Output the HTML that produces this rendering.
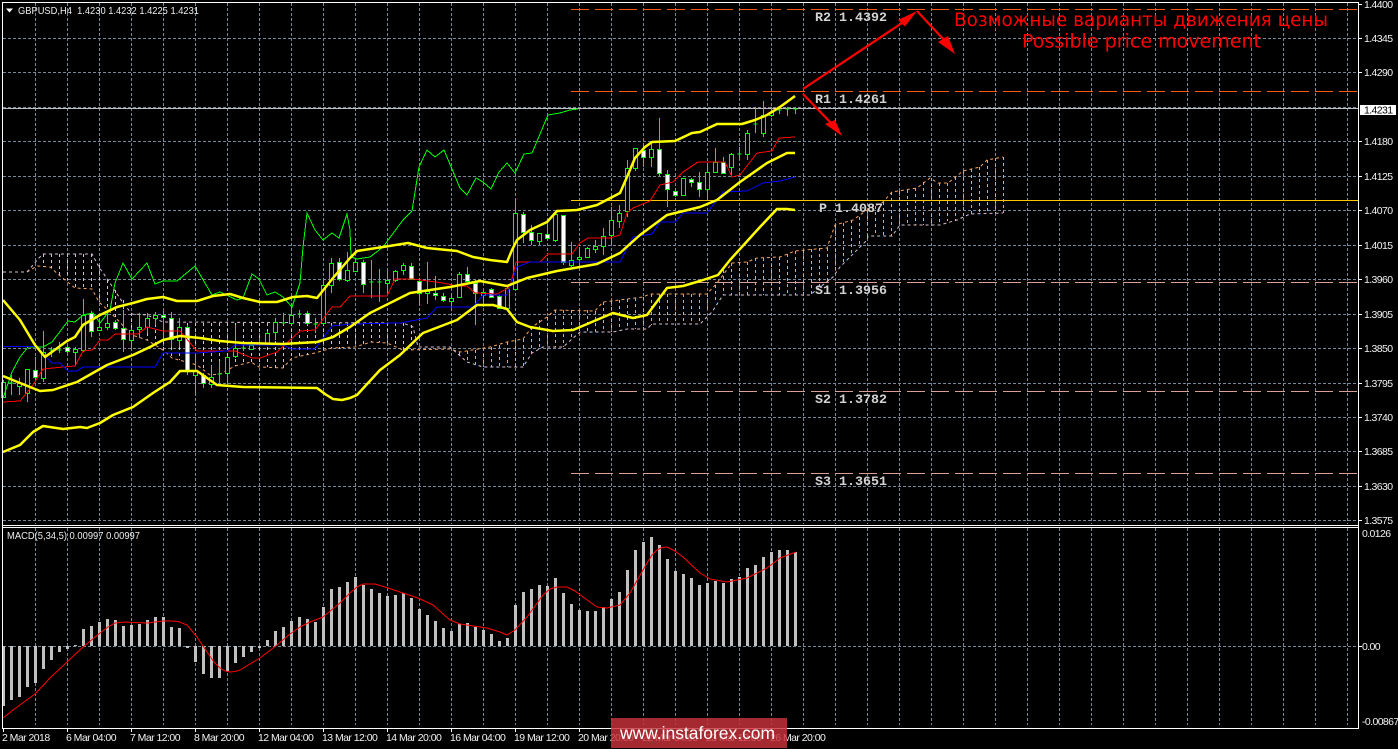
<!DOCTYPE html>
<html><head><meta charset="utf-8"><title>GBPUSD,H4</title>
<style>
html,body{margin:0;padding:0;background:#000;width:1398px;height:749px;overflow:hidden}
svg{display:block}
text{font-family:"Liberation Sans",sans-serif}
.a{font-size:10.5px;fill:#f2f2f2;letter-spacing:-.6px}
.d{font-size:10.5px;fill:#f2f2f2;letter-spacing:-.55px}
.p{font-family:"Liberation Mono",monospace;font-size:13.33px;font-weight:bold;fill:#d3d3d3;white-space:pre}
.r{font-family:"DejaVu Sans",sans-serif;font-size:18.5px;fill:#f00}
</style></head><body>
<svg width="1398" height="749" viewBox="0 0 1398 749" xmlns="http://www.w3.org/2000/svg" fill="none">
<rect width="1398" height="749" fill="#000"/>
<!-- grid -->
<g stroke="#778899" stroke-width="1" stroke-dasharray="3 2">
<path d="M3 38.5H1358M3 72.5H1358M3 107.5H1358M3 141.5H1358M3 176.5H1358M3 210.5H1358M3 245.5H1358M3 279.5H1358M3 314.5H1358M3 348.5H1358M3 383.5H1358M3 417.5H1358M3 451.5H1358M3 486.5H1358M3 520.5H1358M3 646.5H1358"/>
<path d="M35.5 3V524m32-521V524m32-521V524m32-521V524m32-521V524m32-521V524m32-521V524m32-521V524m32-521V524m32-521V524m32-521V524m32-521V524m32-521V524m32-521V524m32-521V524m32-521V524m32-521V524m32-521V524m32-521V524m32-521V524m32-521V524m32-521V524m32-521V524m32-521V524m32-521V524m32-521V524m32-521V524m32-521V524m32-521V524m32-521V524m32-521V524m32-521V524m32-521V524m32-521V524m32-521V524m32-521V524m32-521V524m32-521V524m32-521V524m32-521V524m32-521V524m32-521V524"/>
<path d="M35.5 528V725m32-197V725m32-197V725m32-197V725m32-197V725m32-197V725m32-197V725m32-197V725m32-197V725m32-197V725m32-197V725m32-197V725m32-197V725m32-197V725m32-197V725m32-197V725m32-197V725m32-197V725m32-197V725m32-197V725m32-197V725m32-197V725m32-197V725m32-197V725m32-197V725m32-197V725m32-197V725m32-197V725m32-197V725m32-197V725m32-197V725m32-197V725m32-197V725m32-197V725m32-197V725m32-197V725m32-197V725m32-197V725m32-197V725m32-197V725m32-197V725m32-197V725"/>
</g>
<!-- kumo -->
<g stroke-width="1" stroke-dasharray="3 3">
<path stroke="#f4a460" d="M3 272L27 272L37 266L50 267L59 275L75 288L92 289L99 302L110 312L132 335L147 340L163 350L172 358L197 365L210 375L220 374L235 366L251 362L259 367L283 368L292 358L315 353L332 348L355 347L371 342L387 343L403 350L450 349L460 352L490 347L507 342L523 339L532 327L547 317L555 310L595 311L603 302L643 297L650 294L707 294L717 283L732 263L747 262L757 258L780 257L795 251L827 248L835 225L853 220L867 210L883 202L892 192L917 188L930 178L938 183L948 183L963 171L980 167L987 160L1003 157"/>
<path stroke="#d8bfd8" d="M3 272L27 272L39 258L43 254L92 254L99 267L110 283L123 303L132 314L147 315L163 322L403 323L413 327L418 347L450 347L467 362L483 367L523 367L532 353L543 347L563 347L580 332L613 332L627 329L647 329L652 324L700 324L712 312L723 295L810 295L833 277L840 267L867 240L868 236L892 236L900 225L940 225L957 220L970 214L1003 213"/>
<path stroke="#d8bfd8" d="M43.5 254V267M51.5 254V268M59.5 254V275M67.5 254V280M75.5 254V288M83.5 254V288M91.5 254V289M99.5 265V302M107.5 280V310M115.5 290V318M123.5 300V328M131.5 313V335M139.5 314V338M147.5 315V340M155.5 318V344M163.5 323V350M171.5 323V358M179.5 323V360M187.5 323V362M195.5 323V365M203.5 323V370M211.5 323V375M219.5 323V375M227.5 323V370M235.5 323V366M243.5 323V364M251.5 323V362M259.5 323V366M267.5 323V367M275.5 323V368M283.5 323V368M291.5 323V358M299.5 323V357M307.5 323V355M315.5 323V353M323.5 323V350M331.5 323V348M339.5 323V349M347.5 323V347M355.5 323V347M363.5 323V344M371.5 323V342M379.5 323V342M387.5 323V343M395.5 323V345M403.5 323V350M411.5 325V350"/>
<path stroke="#f4a460" d="M459.5 352V356M467.5 351V362M475.5 350V365M483.5 348V367M491.5 347V367M499.5 345V367M507.5 342V367M515.5 340V367M523.5 339V367M531.5 327V354M539.5 320V348M547.5 317V347M555.5 310V347M563.5 310V347M571.5 310V340M579.5 310V332M587.5 310V332M595.5 311V332M603.5 302V332M611.5 301V332M619.5 300V330M627.5 299V329M635.5 298V329M643.5 297V329M651.5 294V325M659.5 294V324M667.5 294V324M675.5 294V324M683.5 294V324M691.5 294V324M699.5 294V322M707.5 294V312M715.5 285V303M723.5 270V295M731.5 263V295M739.5 262V295M747.5 262V295M755.5 258V295M763.5 258V295M771.5 258V295M779.5 257V295M787.5 254V295M795.5 251V295M803.5 250V295M811.5 249V295M819.5 248V288M827.5 248V281M835.5 225V273M843.5 223V264M851.5 220V256M859.5 217V248M867.5 210V237M875.5 206V236M883.5 202V236M891.5 192V236M899.5 191V225M907.5 190V225M915.5 188V225M923.5 182V225M931.5 178V225M939.5 183V225M947.5 183V221M955.5 177V220M963.5 171V217M971.5 169V214M979.5 167V214M987.5 160V213M995.5 158V213M1003.5 157V213"/>
</g>
<!-- pivots -->
<g stroke-width="1" stroke-dasharray="18 6">
<path stroke="#ff5a14" d="M571 9.5H1357M571 91.5H1357"/>
<path stroke="#d8a090" d="M571 282.5H1357M571 391.5H1357M571 473.5H1357"/>
</g>
<path stroke="#ffc800" d="M571 200.5H1358"/>
<path stroke="#c0c0c0" d="M3 108.5H1358"/>
<!-- candles -->
<path stroke="#0f0" d="M3.5 380V398M11.5 375V395M9.5 383h4M19.5 378V395M27.5 369V402M35.5 357V382M43.5 331V382M51.5 347V357M49.5 350h4M59.5 342V353M57.5 350h4M67.5 345V353M75.5 347V366M83.5 299V352M91.5 311V337M99.5 321V331M107.5 310V330M115.5 320V330M123.5 310V352M131.5 328V348M139.5 313V338M147.5 313V333M155.5 312V325M163.5 311V340M171.5 312V347M179.5 318V347M187.5 325V375M195.5 353V395M203.5 373V388M211.5 365V388M219.5 361V383M217.5 374h4M227.5 356V383M235.5 325V358M243.5 345V351M241.5 348h4M251.5 343V350M259.5 341V346M257.5 343h4M267.5 331V345M275.5 318V340M283.5 313V325M281.5 323h4M291.5 307V325M299.5 310V318M297.5 314h4M307.5 311V325M315.5 318V333M313.5 324h4M323.5 278V325M331.5 258V293M339.5 258V281M347.5 252V282M355.5 258V271M363.5 260V293M371.5 260V298M369.5 282h4M379.5 269V302M377.5 282h4M387.5 270V293M395.5 270V282M403.5 263V275M411.5 263V280M419.5 278V305M427.5 262V304M435.5 276V300M443.5 293V302M451.5 293V311M459.5 272V298M467.5 267V282M475.5 280V325M483.5 290V307M491.5 288V297M499.5 295V308M507.5 287V310M515.5 199V290M523.5 212V243M531.5 225V245M539.5 233V245M547.5 225V240M555.5 212V242M563.5 215V265M571.5 242V267M579.5 247V263M587.5 247V258M595.5 240V253M603.5 228V255M611.5 207V245M619.5 205V228M627.5 160V217M635.5 148V171M643.5 143V167M651.5 143V167M659.5 118V176M667.5 170V207M675.5 188V197M683.5 178V196M691.5 178V187M699.5 172V197M707.5 163V200M715.5 148V172M723.5 157V174M731.5 153V177M739.5 147V160M737.5 154h4M747.5 130V160M755.5 107V133M753.5 124h4M763.5 101V137M771.5 107V117M779.5 107V114M777.5 110h4M787.5 107V116M785.5 109h4M795.5 108V114M793.5 109h4"/>
<path stroke="#0f0" fill="#000" d="M1.5 382.5h4v15h-4zM17.5 383.5h4v3h-4zM25.5 369.5h4v24h-4zM41.5 352.5h4v26h-4zM73.5 349.5h4v3h-4zM81.5 315.5h4v35h-4zM97.5 327.5h4v3h-4zM105.5 323.5h4v4h-4zM129.5 330.5h4v10h-4zM137.5 327.5h4v2h-4zM145.5 318.5h4v9h-4zM153.5 315.5h4v3h-4zM177.5 327.5h4v13h-4zM193.5 370.5h4v5h-4zM209.5 377.5h4v7h-4zM225.5 357.5h4v16h-4zM233.5 348.5h4v8h-4zM249.5 345.5h4v4h-4zM265.5 333.5h4v10h-4zM273.5 322.5h4v10h-4zM289.5 315.5h4v8h-4zM321.5 285.5h4v38h-4zM329.5 263.5h4v22h-4zM345.5 270.5h4v10h-4zM353.5 262.5h4v9h-4zM385.5 280.5h4v3h-4zM393.5 271.5h4v9h-4zM401.5 265.5h4v5h-4zM425.5 291.5h4v2h-4zM449.5 298.5h4v3h-4zM457.5 274.5h4v23h-4zM481.5 292.5h4v3h-4zM505.5 288.5h4v20h-4zM513.5 213.5h4v76h-4zM537.5 233.5h4v8h-4zM553.5 214.5h4v26h-4zM569.5 260.5h4v5h-4zM577.5 257.5h4v2h-4zM585.5 248.5h4v9h-4zM593.5 246.5h4v3h-4zM601.5 236.5h4v10h-4zM609.5 220.5h4v15h-4zM617.5 213.5h4v8h-4zM625.5 168.5h4v43h-4zM633.5 148.5h4v20h-4zM649.5 149.5h4v8h-4zM681.5 178.5h4v17h-4zM705.5 172.5h4v17h-4zM713.5 162.5h4v10h-4zM729.5 154.5h4v13h-4zM745.5 133.5h4v21h-4zM761.5 115.5h4v18h-4zM769.5 112.5h4v3h-4z"/>
<path stroke="#0f0" fill="#fff" d="M33.5 370.5h4v7h-4zM65.5 347.5h4v4h-4zM89.5 313.5h4v18h-4zM113.5 322.5h4v6h-4zM121.5 328.5h4v11h-4zM161.5 315.5h4v2h-4zM169.5 318.5h4v21h-4zM185.5 327.5h4v43h-4zM201.5 375.5h4v8h-4zM305.5 313.5h4v10h-4zM337.5 262.5h4v17h-4zM361.5 262.5h4v22h-4zM409.5 266.5h4v13h-4zM417.5 281.5h4v12h-4zM433.5 293.5h4v2h-4zM441.5 296.5h4v4h-4zM465.5 274.5h4v7h-4zM473.5 283.5h4v10h-4zM489.5 289.5h4v8h-4zM497.5 296.5h4v12h-4zM521.5 214.5h4v18h-4zM529.5 232.5h4v8h-4zM545.5 234.5h4v4h-4zM561.5 215.5h4v47h-4zM641.5 150.5h4v7h-4zM657.5 149.5h4v24h-4zM665.5 174.5h4v15h-4zM673.5 191.5h4v4h-4zM689.5 179.5h4v3h-4zM697.5 182.5h4v7h-4zM721.5 162.5h4v11h-4z"/>
<!-- ichimoku -->
<g shape-rendering="crispEdges">
<path stroke="#0f0" d="M3 398L12 372L20 357L28 347L43 347L52 342L68 321L75 322L83 315L93 313L100 323L110 310L115 283L123 263L132 279L147 263L155 284L163 281L177 281L195 266L212 295L220 292L237 300L243 298L252 274L259 279L267 295L275 292L283 297L292 307L300 283L303 247L307 213L315 230L323 240L332 233L339 238L347 214L350 230L351 257L357 259L370 257L383 247L403 220L412 211L419 167L427 150L435 157L444 150L460 188L467 195L476 178L483 182L491 189L499 172L507 163L515 173L524 154L532 153L535 146L548 115L560 113L570 110L578 109"/>
<path stroke="#f00" d="M3 402L20 401L33 385L43 369L63 367L75 366L83 351L92 350L100 340L108 340L115 334L138 334L147 327L163 331L180 331L197 351L235 351L252 358L260 358L277 352L300 331L315 330L332 307L340 307L350 296L387 296L395 279L413 279L443 283L457 286L467 286L475 293L497 294L510 287L516 262L540 262L548 254L572 254L580 243L588 238L610 238L620 235L627 213L633 208L650 201L660 185L673 182L683 172L698 162L725 162L732 177L740 175L757 153L772 151L779 138L795 137"/>
<path stroke="#00f" d="M3 346.5L35 346.5L52 363L60 363L68 371L77 371L83 367L155 367L163 353L197 353L227 351L235 345L283 345L292 349L315 349L332 326L350 324L400 323L427 318L437 307L473 307L483 295L507 295L517 267L530 262L620 262L633 237L652 234L660 222L675 222L683 213L707 213L723 192L747 191L763 183L780 181L795 177"/>
</g>
<g stroke="#ff0" stroke-width="2.5" stroke-linejoin="round">
<path d="M3 300L20 320L35 345L45 357L67 341L75 337L83 325L100 315L117 307L133 303L147 299L163 297L177 301L197 301L213 296L230 294L243 298L260 302L277 302L293 297L307 296L317 298L325 288L333 278L350 258L357 251L383 247L408 243L427 248L457 251L473 257L490 260L507 262L512 250L517 240L530 230L547 222L557 211L577 210L597 205L620 193L627 177L635 158L645 147L652 142L675 141L692 133L700 132L717 124L742 124L755 120L767 115L780 107L795 96"/>
<path d="M3 376L20 383L40 391L53 390L77 382L107 365L133 355L150 347L163 340L180 336L200 338L220 341L243 343L283 344L317 342L333 337L350 327L370 313L410 293L450 287L480 281L507 286L527 278L557 271L597 264L620 253L640 235L667 215L700 207L717 200L740 182L767 163L787 153L795 153"/>
<path d="M3 452L20 445L33 432L43 426L63 429L80 427L87 428L100 423L113 415L133 407L153 393L170 382L180 371L197 371L217 385L243 387L317 388L325 394L333 399L342 400L350 398L357 395L380 370L400 355L423 333L457 320L477 305L493 305L507 309L517 322L530 327L553 331L573 330L613 313L633 318L647 315L667 288L683 286L700 281L718 275L730 260L760 227L777 209L787 209L795 210"/>
</g>
<!-- arrows -->
<g stroke="#f00" stroke-width="2.2">
<path d="M803 89L905 21"/>
<path d="M917 11L945 41"/>
<path d="M803 94L831 123"/>
</g>
<path fill="#f00" d="M917 11L898 20L905 26.5zM955 54L938 42L948 36zM842 136L825 124L835 120z"/>
<!-- pivot labels -->
<text class="p" x="815" y="21">R2 1.4392</text>
<text class="p" x="815" y="103">R1 1.4261</text>
<text class="p" x="819" y="212">P 1.4087</text>
<text class="p" x="815" y="294">S1 1.3956</text>
<text class="p" x="815" y="403">S2 1.3782</text>
<text class="p" x="815" y="485">S3 1.3651</text>
<text class="r" x="954" y="26" textLength="374" lengthAdjust="spacingAndGlyphs">Возможные варианты движения цены</text>
<text class="r" x="1022" y="47.5" textLength="239" lengthAdjust="spacingAndGlyphs">Possible price movement</text>
<!-- macd -->
<path stroke="#c0c0c0" stroke-width="3" d="M3.5 646V706M11.5 646V700M19.5 646V697M27.5 646V687M35.5 646V683M43.5 646V669M51.5 646V660M59.5 646V652M67.5 646V649M75.5 646V645M83.5 646V629M91.5 646V626M99.5 646V622M107.5 646V619M115.5 646V620M123.5 646V626M131.5 646V625M139.5 646V624M147.5 646V620M155.5 646V617M163.5 646V617M171.5 646V627M179.5 646V628M187.5 646V648M195.5 646V662M203.5 646V674M211.5 646V678M219.5 646V678M227.5 646V671M235.5 646V663M243.5 646V657M251.5 646V652M259.5 646V648M267.5 646V640M275.5 646V631M283.5 646V627M291.5 646V621M299.5 646V617M307.5 646V619M315.5 646V622M323.5 646V607M331.5 646V589M339.5 646V587M347.5 646V582M355.5 646V577M363.5 646V585M371.5 646V589M379.5 646V593M387.5 646V596M395.5 646V595M403.5 646V593M411.5 646V598M419.5 646V609M427.5 646V615M435.5 646V621M443.5 646V628M451.5 646V631M459.5 646V624M467.5 646V623M475.5 646V627M483.5 646V630M491.5 646V634M499.5 646V641M507.5 646V638M515.5 646V605M523.5 646V592M531.5 646V589M539.5 646V585M547.5 646V586M555.5 646V578M563.5 646V593M571.5 646V604M579.5 646V610M587.5 646V611M595.5 646V611M603.5 646V607M611.5 646V599M619.5 646V592M627.5 646V570M635.5 646V550M643.5 646V542M651.5 646V537M659.5 646V545M667.5 646V559M675.5 646V571M683.5 646V574M691.5 646V578M699.5 646V585M707.5 646V583M715.5 646V581M723.5 646V583M731.5 646V579M739.5 646V577M747.5 646V568M755.5 646V565M763.5 646V557M771.5 646V552M779.5 646V550M787.5 646V550M795.5 646V552"/>
<path stroke="#f00" stroke-linejoin="round" d="M3 718L13 710L35 694L50 678L67 662L83 647L100 633L108 627L115 623L125 622L133 622.5L147 623L155 622L163 621L172 621L178 621.5L187 625L197 637L207 652L214 662L220 668L225 671L230 672L235 671.5L240 670L260 658L277 645L290 634L300 627L310 622L323 617L340 603L350 593L357 587L363 584L375 584L385 587L400 592L418 598L433 605L442 613L450 620L460 624L487 628L500 632L507 635L515 630L527 617L543 595L550 589L557 587L567 587L575 591L583 597L597 607L607 608L620 605L630 593L647 563L652 555L657 550L662 547.5L667 547L675 551L683 557L700 573L710 579L727 582L747 578L767 568L780 558L788 555L796 552"/>
<!-- frame -->
<g stroke="#fff">
<path d="M2.5 2V729M2 2.5H1359M1358.5 2V729M2 525.5H1359M2 527.5H1359M2 728.5H1359"/>
<path d="M1359 4.5h3M1359 38.5h3M1359 72.5h3M1359 141.5h3M1359 176.5h3M1359 210.5h3M1359 245.5h3M1359 279.5h3M1359 314.5h3M1359 348.5h3M1359 383.5h3M1359 417.5h3M1359 451.5h3M1359 486.5h3M1359 520.5h3M1359 646.5h3"/>
<path d="M3.5 729v3M67.5 729v3M131.5 729v3M195.5 729v3M259.5 729v3M323.5 729v3M387.5 729v3M451.5 729v3M515.5 729v3M579.5 729v3M643.5 729v3M707.5 729v3M771.5 729v3"/>
</g>
<!-- header -->
<path fill="#fff" d="M6 8.5h7l-3.5 4z"/>
<text x="18" y="14" font-size="10.5" fill="#eee" textLength="181" lengthAdjust="spacingAndGlyphs" style="white-space:pre">GBPUSD,H4  1.4230 1.4232 1.4225 1.4231</text>
<text x="7" y="539" font-size="10.5" fill="#eee" textLength="133" lengthAdjust="spacingAndGlyphs">MACD(5,34,5) 0.00997 0.00997</text>
<!-- price axis -->
<text class="a" x="1364" y="8">1.4400</text>
<text class="a" x="1364" y="42">1.4345</text>
<text class="a" x="1364" y="76">1.4290</text>
<rect x="1360" y="105" width="36" height="10" fill="#fff"/>
<text class="a" x="1364" y="113.5" style="fill:#000">1.4231</text>
<text class="a" x="1364" y="145">1.4180</text>
<text class="a" x="1364" y="180">1.4125</text>
<text class="a" x="1364" y="214">1.4070</text>
<text class="a" x="1364" y="249">1.4015</text>
<text class="a" x="1364" y="283">1.3960</text>
<text class="a" x="1364" y="318">1.3905</text>
<text class="a" x="1364" y="352">1.3850</text>
<text class="a" x="1364" y="387">1.3795</text>
<text class="a" x="1364" y="421">1.3740</text>
<text class="a" x="1364" y="455">1.3685</text>
<text class="a" x="1364" y="490">1.3630</text>
<text class="a" x="1364" y="524">1.3575</text>
<text class="a" x="1362" y="537">0.0126</text>
<text class="a" x="1362" y="650">0.00</text>
<text class="a" x="1362" y="725">-0.00867</text>
<!-- time axis -->
<text class="d" x="2" y="741">2 Mar 2018</text>
<text class="d" x="66" y="741">6 Mar 04:00</text>
<text class="d" x="130" y="741">7 Mar 12:00</text>
<text class="d" x="194" y="741">8 Mar 20:00</text>
<text class="d" x="258" y="741">12 Mar 04:00</text>
<text class="d" x="322" y="741">13 Mar 12:00</text>
<text class="d" x="386" y="741">14 Mar 20:00</text>
<text class="d" x="450" y="741">16 Mar 04:00</text>
<text class="d" x="514" y="741">19 Mar 12:00</text>
<text class="d" x="578" y="741">20 Mar 20:00</text>
<text class="d" x="642" y="741">22 Mar 04:00</text>
<text class="d" x="706" y="741">23 Mar 12:00</text>
<text class="d" x="770" y="741">26 Mar 20:00</text>
<!-- watermark -->
<rect x="611" y="718" width="176" height="30" fill="#c8323a" fill-opacity=".82"/>
<text x="620" y="739" font-size="17.5" fill="#fff" textLength="155" lengthAdjust="spacingAndGlyphs">www.instaforex.com</text>
</svg>
</body></html>
